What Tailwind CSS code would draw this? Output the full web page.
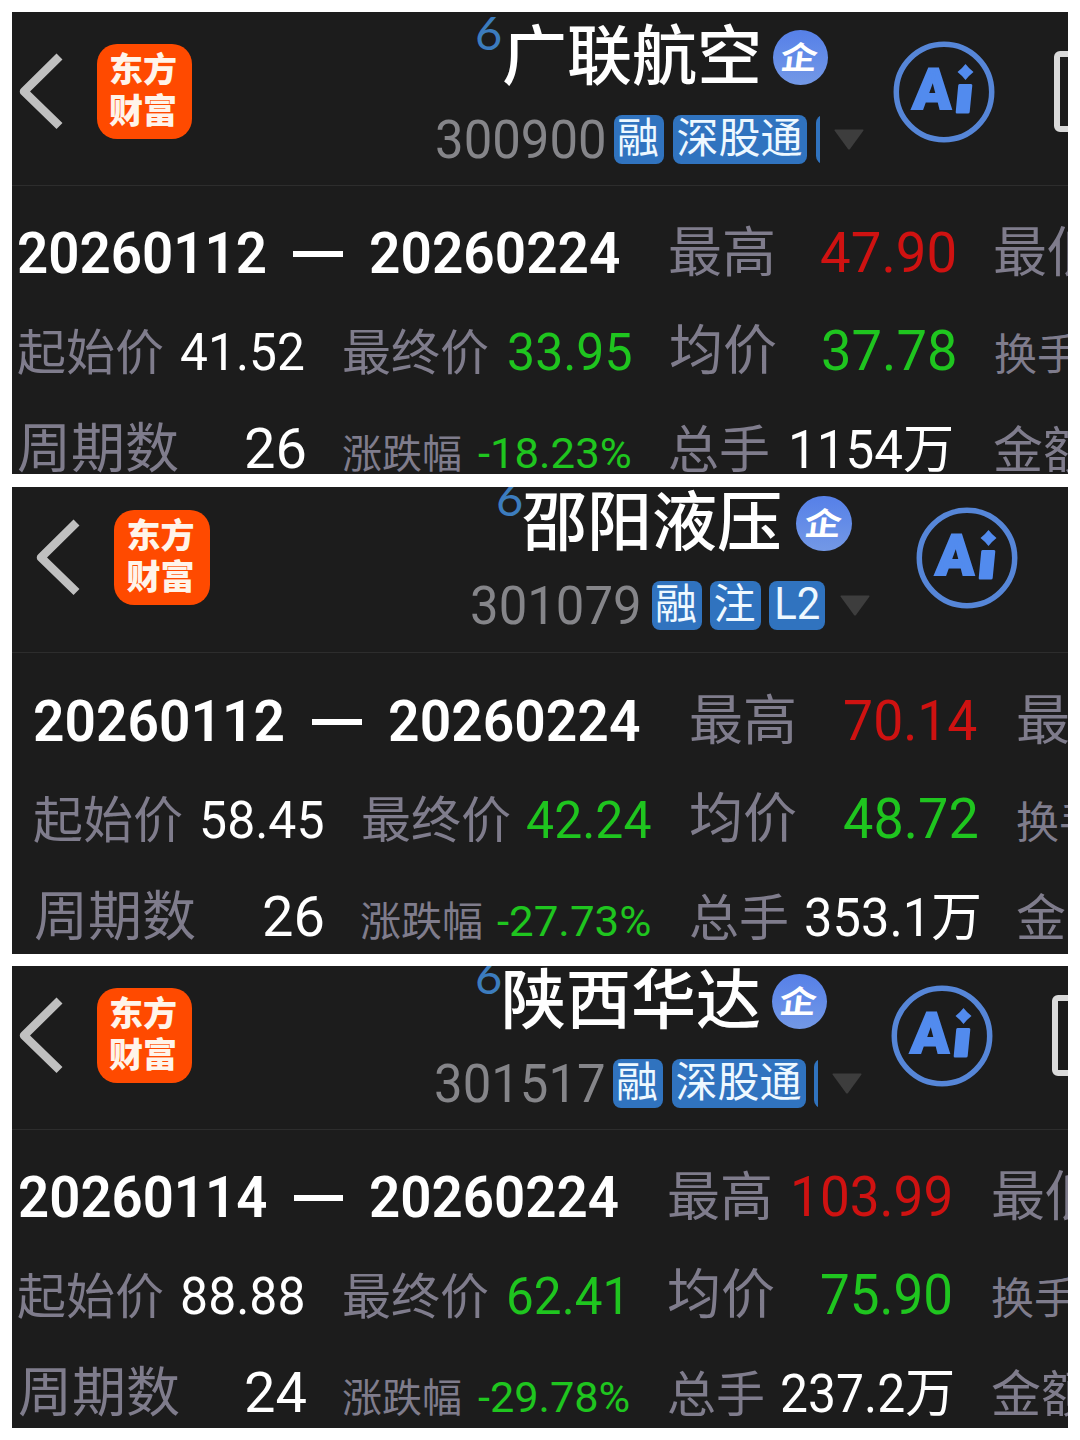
<!DOCTYPE html>
<html lang="zh-CN">
<head>
<meta charset="utf-8">
<title>区间统计</title>
<script src="https://cdn.jsdelivr.net/npm/@tailwindcss/browser@4"></script>
</head>
<body class="bg-white -indent-0.5 whitespace-nowrap font-['Roboto','Noto_Sans_CJK_SC',sans-serif]">
<svg class="hidden">
  <defs>
    <symbol id="back" viewBox="0 0 50 83"><path d="M43.500 6.500 8 41.500 43.500 76" fill="none" stroke="#c0c0c0" stroke-width="8.500" stroke-linejoin="round"/></symbol>
    <symbol id="ai" viewBox="0 0 102 102">
      <circle cx="51" cy="51" r="47.700" fill="none" stroke="#5686d8" stroke-width="5.500"/>
      <path d="M66.500 43h11.500q1.500 0 1.300 1.500L76.700 71q-.2 1.500-1.700 1.500H64q-1.500 0-1.300-1.500l2.500-26.500q.1-1.500 1.300-1.500Z" fill="#528bee"/>
      <path d="M72.500 23q3.500 4.500 8 8-4.500 3.500-8 8-3.500-4.500-8-8 4.500-3.500 8-8Z" fill="#528bee"/>
    </symbol>
    <symbol id="down" viewBox="0 0 30 21"><path d="M1 .5h28q1 .3.300 1.300L16 20q-1 1-2 0L.7 1.800Q0 .8 1 .5Z" fill="#3d3d3d"/></symbol>
  </defs>
</svg>
<main class="flex h-[1440px] w-[1080px] flex-col overflow-hidden px-3 pt-3">

  <section class="h-[462px] w-[1056px] shrink-0 overflow-hidden bg-[#1c1c1c]">
    <header class="flex h-[173px] items-end">
      <div class="flex h-[173px] shrink-0 items-start">
        <svg class="mt-[38px] ml-1 h-[83px] w-[50px] shrink-0"><use href="#back"/></svg>
        <div class="mt-8 ml-[31px] flex h-[95px] w-[95px] shrink-0 flex-col items-center rounded-[20px] bg-[#ff4a00] pt-[3px] font-['Noto_Sans_CJK_SC',sans-serif] text-[34px] leading-[41px] font-black text-[#fff4ea]"><span class="block w-[67px]">东方</span><span class="block w-[67px]">财富</span></div>
        <div class="w-[701px] shrink-0">
          <div class="flex h-[103px] items-start">
            <span class="-mt-[3px] ml-[285px] block w-[23px] font-['Lato',sans-serif] text-[47px] leading-none text-[#3c7cbe]">6</span>
            <span class="mt-[7px] ml-1 block w-[257px] font-['Noto_Sans_CJK_SC',sans-serif] text-[65px] leading-none font-medium text-white">广联航空</span>
            <span class="mt-[18px] ml-3 flex h-[55px] w-[55px] items-center justify-center rounded-full bg-linear-to-b from-[#5680e8] to-[#7398e6] pb-1"><span class="block w-[35px] scale-y-[.85] -skew-x-6 font-['Noto_Sans_CJK_SC',sans-serif] text-[37px] leading-none font-bold text-white">企</span></span>
          </div>
          <div class="flex items-start">
            <span class="-mt-px ml-[245px] block w-[167px] origin-left scale-x-[.96] text-[53px] leading-none text-[#858589]">300900</span>
            <span class="ml-[10px] flex h-[49px] w-[50px] justify-center rounded-lg bg-[#3073bf]"><span class="-mt-px block w-10 font-['Noto_Sans_CJK_SC',sans-serif] text-[42px] leading-none text-[#eef8ff]">融</span></span>
            <span class="ml-[9px] flex h-[49px] w-[134px] justify-center rounded-lg bg-[#3073bf]"><span class="-mt-px block w-[123px] font-['Noto_Sans_CJK_SC',sans-serif] text-[42px] leading-none text-[#eef8ff]">深股通</span></span>
            <span class="ml-[9px] h-[49px] w-1 overflow-hidden"><span class="block h-[49px] w-10 rounded-lg bg-[#3073bf]"></span></span>
            <svg class="mt-3.5 ml-3.5 h-[21px] w-[30px] shrink-0"><use href="#down"/></svg>
          </div>
        </div>
        <div class="relative mt-[29px] h-[102px] w-[102px] shrink-0"><svg class="h-[102px] w-[102px]"><use href="#ai"/></svg><span class="absolute top-5 left-[22px] block w-[36px] -skew-x-3 text-[57px] leading-none font-black text-[#528bee] [-webkit-text-stroke:2px_#528bee]">A</span></div>
        <span class="mt-[39px] ml-[59px] h-[81px] w-[60px] shrink-0 rounded-md border-[6px] border-[#dadada]"></span>
      </div>
    </header>
    <div class="border-t border-[#2d2d2d] pt-9 leading-none text-white">
      <div class="flex h-[98px] items-baseline">
        <span class="ml-[7px] block w-[247px] shrink-0 origin-left translate-y-px scale-x-[.943] text-[58px] font-semibold">20260112</span>
        <span class="ml-[27px] h-1.5 w-[50px] shrink-0 -translate-y-[15px] bg-white"></span>
        <span class="ml-7 block w-[249px] shrink-0 origin-left translate-y-px scale-x-[.948] text-[58px] font-semibold">20260224</span>
        <span class="ml-[50px] block w-[105px] shrink-0 font-['Noto_Sans_CJK_SC',sans-serif] text-[54px] text-[#7f7c8c]">最高</span>
        <span class="ml-[47px] block w-[134px] shrink-0 origin-left scale-x-[.975] text-[56px] text-[#cf1211]">47.90</span>
        <span class="ml-[39px] block w-[105px] shrink-0 font-['Noto_Sans_CJK_SC',sans-serif] text-[54px] text-[#7f7c8c]">最低</span>
      </div>
      <div class="flex h-[98px] items-baseline">
        <span class="ml-[7px] block w-[145px] shrink-0 font-['Noto_Sans_CJK_SC',sans-serif] text-[49px] text-[#7f7c8c]">起始价</span>
        <span class="ml-[18px] block w-[123px] shrink-0 origin-left scale-x-[.955] text-[52px]">41.52</span>
        <span class="ml-[39px] block w-[146px] shrink-0 font-['Noto_Sans_CJK_SC',sans-serif] text-[49px] text-[#7f7c8c]">最终价</span>
        <span class="ml-[19px] block w-[122px] shrink-0 origin-left scale-x-[.96] text-[52px] text-[#1fc51f]">33.95</span>
        <span class="ml-[40px] block w-[105px] shrink-0 font-['Noto_Sans_CJK_SC',sans-serif] text-[54px] text-[#7f7c8c]">均价</span>
        <span class="ml-[47px] block w-[134px] shrink-0 origin-left scale-x-[.97] text-[56px] text-[#1fc51f]">37.78</span>
        <span class="ml-[39px] block w-[84px] shrink-0 font-['Noto_Sans_CJK_SC',sans-serif] text-[43px] text-[#7f7c8c]">换手</span>
      </div>
      <div class="flex h-[98px] items-baseline">
        <span class="ml-[7px] block w-[159px] shrink-0 font-['Noto_Sans_CJK_SC',sans-serif] text-[54px] text-[#7f7c8c]">周期数</span>
        <span class="ml-[68px] block w-[59px] shrink-0 text-[56px]">26</span>
        <span class="ml-[39px] block w-[119px] shrink-0 font-['Noto_Sans_CJK_SC',sans-serif] text-[40px] text-[#7f7c8c]">涨跌幅</span>
        <span class="ml-[17px] block w-[152px] shrink-0 origin-left scale-x-[1.04] text-[42px] text-[#1fc51f]">-18.23%</span>
        <span class="ml-[38px] block w-[100px] shrink-0 font-['Noto_Sans_CJK_SC',sans-serif] text-[51px] text-[#7f7c8c]">总手</span>
        <span class="ml-[20px] block w-[165px] shrink-0 origin-left scale-x-[.965] text-[53px]">1154万</span>
        <span class="ml-[40px] block w-[99px] shrink-0 font-['Noto_Sans_CJK_SC',sans-serif] text-[50px] text-[#7f7c8c]">金额</span>
      </div>
    </div>
  </section>

  <section class="mt-[13px] h-[467px] w-[1056px] shrink-0 overflow-hidden bg-[#1c1c1c]">
    <header class="flex h-[165px] items-end">
      <div class="flex h-[174px] shrink-0 items-start">
        <svg class="mt-[38px] ml-[21px] h-[83px] w-[50px] shrink-0"><use href="#back"/></svg>
        <div class="mt-8 ml-[31px] flex h-[95px] w-[96px] shrink-0 flex-col items-center rounded-[20px] bg-[#ff4a00] pt-[3px] font-['Noto_Sans_CJK_SC',sans-serif] text-[34px] leading-[41px] font-black text-[#fff4ea]"><span class="block w-[67px]">东方</span><span class="block w-[67px]">财富</span></div>
        <div class="w-[706px] shrink-0">
          <div class="flex h-[103px] items-start">
            <span class="-mt-[3px] ml-[288px] block w-[23px] font-['Lato',sans-serif] text-[47px] leading-none text-[#3c7cbe]">6</span>
            <span class="mt-[7px] ml-[3px] block w-[261px] font-['Noto_Sans_CJK_SC',sans-serif] text-[65px] leading-none font-medium text-white">邵阳液压</span>
            <span class="mt-[18px] ml-[11px] flex h-[55px] w-[56px] items-center justify-center rounded-full bg-linear-to-b from-[#5680e8] to-[#7398e6] pb-1"><span class="block w-[35px] scale-y-[.85] -skew-x-6 font-['Noto_Sans_CJK_SC',sans-serif] text-[37px] leading-none font-bold text-white">企</span></span>
          </div>
          <div class="flex items-start">
            <span class="-mt-px ml-[262px] block w-[169px] origin-left scale-x-[.96] text-[53px] leading-none text-[#858589]">301079</span>
            <span class="ml-[11px] flex h-[49px] w-[50px] justify-center rounded-lg bg-[#3073bf]"><span class="-mt-px block w-10 font-['Noto_Sans_CJK_SC',sans-serif] text-[42px] leading-none text-[#eef8ff]">融</span></span>
            <span class="ml-[8px] flex h-[49px] w-[51px] justify-center rounded-lg bg-[#3073bf]"><span class="-mt-px block w-10 font-['Noto_Sans_CJK_SC',sans-serif] text-[42px] leading-none text-[#eef8ff]">注</span></span>
            <span class="ml-[8px] flex h-[49px] w-[56px] justify-center rounded-lg bg-[#3073bf]"><span class="block w-[43px] origin-left scale-x-[.93] text-[45px] leading-none text-[#eef8ff]">L2</span></span>
            <svg class="mt-3.5 ml-[15px] h-[21px] w-[30px] shrink-0"><use href="#down"/></svg>
          </div>
        </div>
        <div class="relative mt-[29px] h-[102px] w-[102px] shrink-0"><svg class="h-[102px] w-[102px]"><use href="#ai"/></svg><span class="absolute top-5 left-[22px] block w-[36px] -skew-x-3 text-[57px] leading-none font-black text-[#528bee] [-webkit-text-stroke:2px_#528bee]">A</span></div>
      </div>
    </header>
    <div class="border-t border-[#2d2d2d] pt-[37px] leading-none text-white">
      <div class="flex h-[98px] items-baseline">
        <span class="ml-[23px] block w-[249px] shrink-0 origin-left translate-y-px scale-x-[.95] text-[58px] font-semibold">20260112</span>
        <span class="ml-[28px] h-1.5 w-[50px] shrink-0 -translate-y-[15px] bg-white"></span>
        <span class="ml-7 block w-[250px] shrink-0 origin-left translate-y-px scale-x-[.952] text-[58px] font-semibold">20260224</span>
        <span class="ml-[51px] block w-[105px] shrink-0 font-['Noto_Sans_CJK_SC',sans-serif] text-[54px] text-[#7f7c8c]">最高</span>
        <span class="ml-[49px] block w-[135px] shrink-0 origin-left scale-x-[.955] text-[56px] text-[#cf1211]">70.14</span>
        <span class="ml-[38px] block w-[105px] shrink-0 font-['Noto_Sans_CJK_SC',sans-serif] text-[54px] text-[#7f7c8c]">最低</span>
      </div>
      <div class="flex h-[98px] items-baseline">
        <span class="ml-[23px] block w-[147px] shrink-0 font-['Noto_Sans_CJK_SC',sans-serif] text-[50px] text-[#7f7c8c]">起始价</span>
        <span class="ml-[19px] block w-[122px] shrink-0 origin-left scale-x-[.96] text-[52px]">58.45</span>
        <span class="ml-[40px] block w-[147px] shrink-0 font-['Noto_Sans_CJK_SC',sans-serif] text-[50px] text-[#7f7c8c]">最终价</span>
        <span class="ml-[18px] block w-[124px] shrink-0 origin-left scale-x-[.96] text-[52px] text-[#1fc51f]">42.24</span>
        <span class="ml-[39px] block w-[106px] shrink-0 font-['Noto_Sans_CJK_SC',sans-serif] text-[54px] text-[#7f7c8c]">均价</span>
        <span class="ml-[48px] block w-[134px] shrink-0 origin-left scale-x-[.965] text-[56px] text-[#1fc51f]">48.72</span>
        <span class="ml-[39px] block w-[84px] shrink-0 font-['Noto_Sans_CJK_SC',sans-serif] text-[43px] text-[#7f7c8c]">换手</span>
      </div>
      <div class="flex h-[98px] items-baseline">
        <span class="ml-[24px] block w-[160px] shrink-0 font-['Noto_Sans_CJK_SC',sans-serif] text-[54px] text-[#7f7c8c]">周期数</span>
        <span class="ml-[68px] block w-[59px] shrink-0 text-[56px]">26</span>
        <span class="ml-[39px] block w-[121px] shrink-0 font-['Noto_Sans_CJK_SC',sans-serif] text-[41px] text-[#7f7c8c]">涨跌幅</span>
        <span class="ml-[16px] block w-[154px] shrink-0 origin-left scale-x-[1.045] text-[42px] text-[#1fc51f]">-27.73%</span>
        <span class="ml-[38px] block w-[97px] shrink-0 font-['Noto_Sans_CJK_SC',sans-serif] text-[50px] text-[#7f7c8c]">总手</span>
        <span class="ml-[18px] block w-[172px] shrink-0 origin-left scale-x-[.955] text-[53px]">353.1万</span>
        <span class="ml-[40px] block w-[99px] shrink-0 font-['Noto_Sans_CJK_SC',sans-serif] text-[50px] text-[#7f7c8c]">金额</span>
      </div>
    </div>
  </section>

  <section class="mt-3 h-[462px] w-[1056px] shrink-0 overflow-hidden bg-[#1c1c1c]">
    <header class="flex h-[163px] items-end">
      <div class="flex h-[173px] shrink-0 items-start">
        <svg class="mt-[38px] ml-1 h-[83px] w-[50px] shrink-0"><use href="#back"/></svg>
        <div class="mt-8 ml-[31px] flex h-[95px] w-[95px] shrink-0 flex-col items-center rounded-[20px] bg-[#ff4a00] pt-[3px] font-['Noto_Sans_CJK_SC',sans-serif] text-[34px] leading-[41px] font-black text-[#fff4ea]"><span class="block w-[67px]">东方</span><span class="block w-[67px]">财富</span></div>
        <div class="w-[699px] shrink-0">
          <div class="flex h-[103px] items-start">
            <span class="-mt-[3px] ml-[285px] block w-[22px] font-['Lato',sans-serif] text-[47px] leading-none text-[#3c7cbe]">6</span>
            <span class="mt-[7px] ml-1 block w-[258px] font-['Noto_Sans_CJK_SC',sans-serif] text-[65px] leading-none font-medium text-white">陕西华达</span>
            <span class="mt-[18px] ml-[11px] flex h-[55px] w-[55px] items-center justify-center rounded-full bg-linear-to-b from-[#5680e8] to-[#7398e6] pb-1"><span class="block w-[35px] scale-y-[.85] -skew-x-6 font-['Noto_Sans_CJK_SC',sans-serif] text-[37px] leading-none font-bold text-white">企</span></span>
          </div>
          <div class="flex items-start">
            <span class="-mt-px ml-[244px] block w-[167px] origin-left scale-x-[.96] text-[53px] leading-none text-[#858589]">301517</span>
            <span class="ml-[10px] flex h-[49px] w-[50px] justify-center rounded-lg bg-[#3073bf]"><span class="-mt-px block w-10 font-['Noto_Sans_CJK_SC',sans-serif] text-[42px] leading-none text-[#eef8ff]">融</span></span>
            <span class="ml-[9px] flex h-[49px] w-[134px] justify-center rounded-lg bg-[#3073bf]"><span class="-mt-px block w-[123px] font-['Noto_Sans_CJK_SC',sans-serif] text-[42px] leading-none text-[#eef8ff]">深股通</span></span>
            <span class="ml-[8px] h-[49px] w-1 overflow-hidden"><span class="block h-[49px] w-10 rounded-lg bg-[#3073bf]"></span></span>
            <svg class="mt-3.5 ml-3.5 h-[21px] w-[30px] shrink-0"><use href="#down"/></svg>
          </div>
        </div>
        <div class="relative mt-[29px] h-[102px] w-[102px] shrink-0"><svg class="h-[102px] w-[102px]"><use href="#ai"/></svg><span class="absolute top-5 left-[22px] block w-[36px] -skew-x-3 text-[57px] leading-none font-black text-[#528bee] [-webkit-text-stroke:2px_#528bee]">A</span></div>
        <span class="mt-[39px] ml-[59px] h-[81px] w-[60px] shrink-0 rounded-md border-[6px] border-[#dadada]"></span>
      </div>
    </header>
    <div class="border-t border-[#2d2d2d] pt-9 leading-none text-white">
      <div class="flex h-[98px] items-baseline">
        <span class="ml-[8px] block w-[246px] shrink-0 origin-left translate-y-px scale-x-[.94] text-[58px] font-semibold">20260114</span>
        <span class="ml-[28px] h-1.5 w-[49px] shrink-0 -translate-y-[15px] bg-white"></span>
        <span class="ml-7 block w-[247px] shrink-0 origin-left translate-y-px scale-x-[.943] text-[58px] font-semibold">20260224</span>
        <span class="ml-[51px] block w-[102px] shrink-0 font-['Noto_Sans_CJK_SC',sans-serif] text-[53px] text-[#7f7c8c]">最高</span>
        <span class="ml-[21px] block w-[161px] shrink-0 origin-left scale-x-[.948] text-[56px] text-[#cf1211]">103.99</span>
        <span class="ml-[40px] block w-[105px] shrink-0 font-['Noto_Sans_CJK_SC',sans-serif] text-[54px] text-[#7f7c8c]">最低</span>
      </div>
      <div class="flex h-[98px] items-baseline">
        <span class="ml-[7px] block w-[145px] shrink-0 font-['Noto_Sans_CJK_SC',sans-serif] text-[49px] text-[#7f7c8c]">起始价</span>
        <span class="ml-[18px] block w-[122px] shrink-0 origin-left scale-x-[.96] text-[52px]">88.88</span>
        <span class="ml-[40px] block w-[146px] shrink-0 font-['Noto_Sans_CJK_SC',sans-serif] text-[49px] text-[#7f7c8c]">最终价</span>
        <span class="ml-[18px] block w-[117px] shrink-0 origin-left scale-x-[.95] text-[52px] text-[#1fc51f]">62.41</span>
        <span class="ml-[44px] block w-[105px] shrink-0 font-['Noto_Sans_CJK_SC',sans-serif] text-[54px] text-[#7f7c8c]">均价</span>
        <span class="ml-[48px] block w-[132px] shrink-0 origin-left scale-x-[.945] text-[56px] text-[#1fc51f]">75.90</span>
        <span class="ml-[39px] block w-[84px] shrink-0 font-['Noto_Sans_CJK_SC',sans-serif] text-[43px] text-[#7f7c8c]">换手</span>
      </div>
      <div class="flex h-[98px] items-baseline">
        <span class="ml-[8px] block w-[158px] shrink-0 font-['Noto_Sans_CJK_SC',sans-serif] text-[54px] text-[#7f7c8c]">周期数</span>
        <span class="ml-[68px] block w-[60px] shrink-0 text-[56px]">24</span>
        <span class="ml-[38px] block w-[119px] shrink-0 font-['Noto_Sans_CJK_SC',sans-serif] text-[40px] text-[#7f7c8c]">涨跌幅</span>
        <span class="ml-[17px] block w-[151px] shrink-0 origin-left scale-x-[1.03] text-[42px] text-[#1fc51f]">-29.78%</span>
        <span class="ml-[38px] block w-[96px] shrink-0 font-['Noto_Sans_CJK_SC',sans-serif] text-[49px] text-[#7f7c8c]">总手</span>
        <span class="ml-[17px] block w-[169px] shrink-0 origin-left scale-x-[.94] text-[53px]">237.2万</span>
        <span class="ml-[42px] block w-[99px] shrink-0 font-['Noto_Sans_CJK_SC',sans-serif] text-[50px] text-[#7f7c8c]">金额</span>
      </div>
    </div>
  </section>
</main>
</body>
</html>
